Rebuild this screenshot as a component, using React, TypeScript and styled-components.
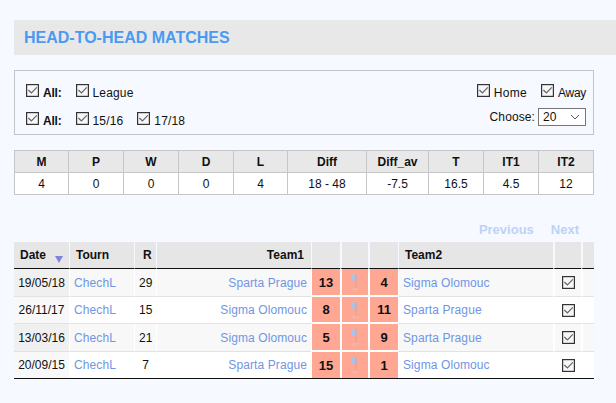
import React from 'react';
import styled, { createGlobalStyle } from 'styled-components';

const Global = createGlobalStyle`
  html, body { margin: 0; padding: 0; background: #f6f9ff; }
  body { font-family: "Liberation Sans", Arial, sans-serif; font-size: 12px; color: #111; overflow: hidden; }
`;
const Page = styled.div`
  width: 616px; height: 403px; padding-top: 20px; padding-left: 14px; box-sizing: border-box; overflow: hidden;
`;
const TitleBar = styled.div`
  height: 35px; background: #e8e8e8; display: flex; align-items: center; padding-left: 10px;
`;
const Title = styled.h2`
  margin: 0; font-size: 16px; font-weight: 700; color: #4a9af0;
`;
const Filters = styled.div`
  box-sizing: border-box; width: 580px; height: 65px; margin-top: 15px; border: 1px solid #c4c4c4;
  display: flex; justify-content: space-between; padding: 13px 7px 0 11px;
`;
const FilterColumn = styled.div<{ $end?: boolean; $gap: number }>`
  display: flex; flex-direction: column; gap: ${p => p.$gap}px; align-items: ${p => (p.$end ? 'flex-end' : 'flex-start')};
`;
const FilterRow = styled.div`
  display: flex; align-items: center;
`;
const Box = styled.span`
  display: block; width: 13px; height: 13px; flex: none;
  svg { display: block; }
`;
const Option = styled.label<{ $gap?: number; $track?: number }>`
  display: flex; align-items: flex-start; gap: 4px; height: 16px; line-height: 18px;
  margin-right: ${p => p.$gap ?? 0}px; font-size: 12px; letter-spacing: ${p => p.$track ?? 0.15}px;
`;
const AllLabel = styled.b`font-weight: 700; letter-spacing: -0.2px;`;
const ChooseText = styled.span`margin-right: 3px; letter-spacing: 0.1px;`;
const SelectBox = styled.div`
  box-sizing: border-box; width: 48px; height: 18px; border: 1px solid #767676; background: #fff;
  display: flex; align-items: center; justify-content: space-between; padding: 0 5px 0 4px; font-size: 12px;
`;
const StatsTable = styled.table`
  width: 580px; margin-top: 15px; border-collapse: collapse; table-layout: fixed; background: #fff;
  th, td { border: 1px solid #c6c6c6; text-align: center; padding: 0; font-size: 12px; }
  th { background: #e8e8e8; height: 21px; font-weight: 700; }
  td { height: 21px; }
`;
const Pager = styled.div`
  width: 565px; height: 47px; display: flex; justify-content: flex-end; align-items: flex-end; gap: 17px;
  padding-bottom: 5px; box-sizing: border-box; font-size: 13px; font-weight: 700; color: #bdd3f6;
`;
const MatchTable = styled.table`
  width: 580px; border-collapse: separate; border-spacing: 0; table-layout: fixed;
  border-bottom: 1px solid #111;
  th:nth-child(6), th:nth-child(7), th:nth-child(9), th:nth-child(10),
  td:nth-child(6), td:nth-child(7), td:nth-child(9), td:nth-child(10) { border-left-width: 2px; }
`;
const HeadCell = styled.th<{ $align?: string; $left?: number; $right?: number }>`
  box-sizing: border-box; height: 27px; background: #e6e6e6; font-size: 12px; font-weight: 700; color: #111;
  padding: 0 ${p => p.$right ?? 6}px 0 ${p => p.$left ?? 6}px;
  text-align: ${p => p.$align ?? 'left'};
  border-left: 1px solid #f6f9ff; border-bottom: 1px solid #111; position: relative;
  &:first-child { border-left: 0; }
`;
const SortMark = styled.span`
  position: absolute; left: 41px; top: 14px; width: 0; height: 0;
  border-left: 4px solid transparent; border-right: 4px solid transparent; border-top: 7px solid #7d84e0;
`;
const Row = styled.tr<{ $shade: boolean; $height: number }>`
  background: ${p => (p.$shade ? '#f8f8f8' : '#ffffff')};
  td { height: ${p => p.$height}px; }
  &:last-child td { border-bottom: 0; }
`;
const Cell = styled.td<{ $align?: string; $tone?: string }>`
  padding: 0 4px; font-size: 12px; box-sizing: border-box;
  text-align: ${p => p.$align ?? 'left'};
  background: ${p => p.$tone ?? 'transparent'};
  border-left: 1px solid #fff; border-bottom: 1px solid #e2e2e2;
  &:first-child { border-left: 0; }
`;
const TeamLink = styled.span`color: #6f96e4; letter-spacing: 0.1px;`;
const Score = styled(Cell)`
  background: #ffa792; font-weight: 700; text-align: center; font-size: 13px; padding: 0;
  border-bottom: 2px solid #fff;
`;
const FlagCell = styled(Cell)`
  background: #ffa792; text-align: center; padding: 0; border-bottom: 2px solid #fff;
  svg { display: block; margin: 0 auto; }
`;
const CheckWrap = styled.div`display: flex; justify-content: center;`;

const Check = () => (
  <Box>
    <svg width="13" height="13" viewBox="0 0 13 13">
      <rect x="0.6" y="0.6" width="11.8" height="11.8" fill="#f7f7f7" stroke="#333" strokeWidth="1.2" />
      <path d="M2.4 6 L5.4 9 L10.8 3.4" fill="none" stroke="#666" strokeWidth="1.2" />
    </svg>
  </Box>
);

const Flag = () => (
  <svg width="10" height="20" viewBox="0 0 10 20">
    <rect x="1" y="2.5" width="5.5" height="6" fill="#a9c3ec" />
    <rect x="5.5" y="2" width="1.2" height="14" fill="#d2a8a0" />
    <ellipse cx="5" cy="17" rx="3.5" ry="1.6" fill="#f5b3a3" />
  </svg>
);

const stats = [
  ['M', '4', 54], ['P', '0', 55], ['W', '0', 55], ['D', '0', 55], ['L', '4', 54],
  ['Diff', '18 - 48', 79], ['Diff_av', '-7.5', 62], ['T', '16.5', 55], ['IT1', '4.5', 55], ['IT2', '12', 55],
] as const;

const matches = [
  { date: '19/05/18', round: '29', t1: 'Sparta Prague', s1: '13', s2: '4', t2: 'Sigma Olomouc', h: 28 },
  { date: '26/11/17', round: '15', t1: 'Sigma Olomouc', s1: '8', s2: '11', t2: 'Sparta Prague', h: 27 },
  { date: '13/03/16', round: '21', t1: 'Sigma Olomouc', s1: '5', s2: '9', t2: 'Sparta Prague', h: 28 },
  { date: '20/09/15', round: '7', t1: 'Sparta Prague', s1: '15', s2: '1', t2: 'Sigma Olomouc', h: 26 },
];

const widths = [55, 65, 22, 155, 29, 28, 30, 155, 28, 13];

export default function App() {
  return (
    <Page>
      <Global />
      <TitleBar><Title>HEAD-TO-HEAD MATCHES</Title></TitleBar>
      <Filters>
        <FilterColumn $gap={12}>
          <FilterRow>
            <Option $gap={14}><Check /><AllLabel>All:</AllLabel></Option>
            <Option><Check />League</Option>
          </FilterRow>
          <FilterRow>
            <Option $gap={14}><Check /><AllLabel>All:</AllLabel></Option>
            <Option $gap={14}><Check />15/16</Option>
            <Option><Check />17/18</Option>
          </FilterRow>
        </FilterColumn>
        <FilterColumn $end $gap={8}>
          <FilterRow>
            <Option $gap={14} $track={0.3}><Check />Home</Option>
            <Option $track={-0.3}><Check />Away</Option>
          </FilterRow>
          <FilterRow>
            <ChooseText>Choose:</ChooseText>
            <SelectBox>
              20
              <svg width="10" height="6" viewBox="0 0 10 6"><path d="M1 1 L5 5 L9 1" fill="none" stroke="#555" /></svg>
            </SelectBox>
          </FilterRow>
        </FilterColumn>
      </Filters>
      <StatsTable>
        <colgroup>{stats.map(s => <col key={s[0]} width={s[2]} />)}</colgroup>
        <thead><tr>{stats.map(s => <th key={s[0]}>{s[0]}</th>)}</tr></thead>
        <tbody><tr>{stats.map(s => <td key={s[0]}>{s[1]}</td>)}</tr></tbody>
      </StatsTable>
      <Pager><span>Previous</span><span>Next</span></Pager>
      <MatchTable>
        <colgroup>{widths.map((w, i) => <col key={i} width={w} />)}</colgroup>
        <thead>
          <tr>
            <HeadCell>Date<SortMark /></HeadCell>
            <HeadCell>Tourn</HeadCell>
            <HeadCell $left={8}>R</HeadCell>
            <HeadCell $align="right" $right={7}>Team1</HeadCell>
            <HeadCell /><HeadCell /><HeadCell />
            <HeadCell>Team2</HeadCell>
            <HeadCell /><HeadCell />
          </tr>
        </thead>
        <tbody>
          {matches.map((m, i) => (
            <Row key={m.date} $shade={i % 2 === 0} $height={m.h}>
              <Cell $align="center" $tone={i % 2 === 0 ? '#f0f0f0' : '#f8f8f8'}>{m.date}</Cell>
              <Cell><TeamLink>ChechL</TeamLink></Cell>
              <Cell $align="center">{m.round}</Cell>
              <Cell $align="right"><TeamLink>{m.t1}</TeamLink></Cell>
              <Score>{m.s1}</Score>
              <FlagCell><Flag /></FlagCell>
              <Score>{m.s2}</Score>
              <Cell><TeamLink>{m.t2}</TeamLink></Cell>
              <Cell><CheckWrap><Check /></CheckWrap></Cell>
              <Cell />
            </Row>
          ))}
        </tbody>
      </MatchTable>
    </Page>
  );
}
